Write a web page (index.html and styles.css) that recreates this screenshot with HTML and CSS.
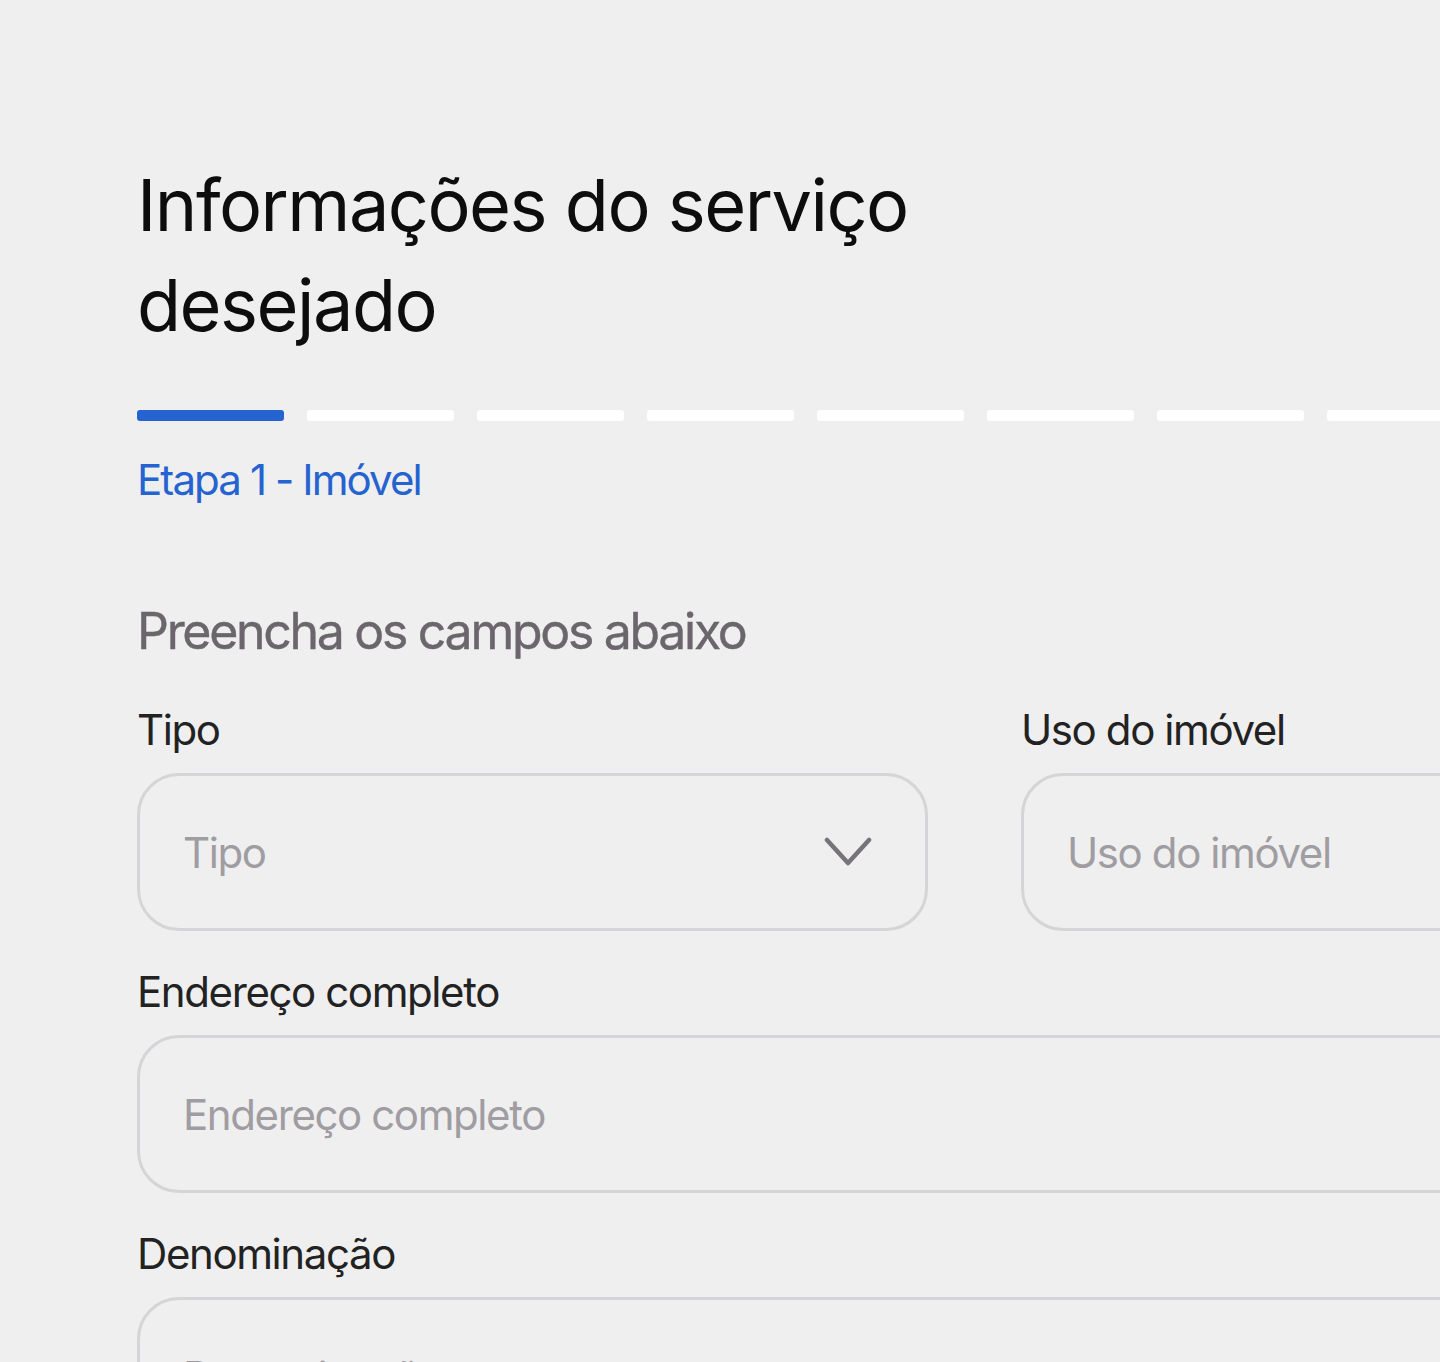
FILE: index.html
```html
<!DOCTYPE html>
<html lang="pt-BR">

<head>
    <meta charset="UTF-8">
    <meta name="viewport" content="width=device-width, initial-scale=1.0">
    <title>Informações do serviço desejado</title>
    <link rel="stylesheet" href="styles.css">
</head>

<body>
    <div class="page">
        <h1 class="title">Informações do serviço<br>desejado</h1>

        <div class="steps">
            <span class="step active"></span>
            <span class="step"></span>
            <span class="step"></span>
            <span class="step"></span>
            <span class="step"></span>
            <span class="step"></span>
            <span class="step"></span>
            <span class="step"></span>
            <span class="step"></span>
        </div>
        <p class="step-name">Etapa 1 - Imóvel</p>

        <form class="form">
            <h2 class="form-title">Preencha os campos abaixo</h2>

            <div class="row">
                <div class="field">
                    <label class="label">Tipo</label>
                    <div class="input select">
                        <span class="placeholder">Tipo</span>
                        <svg class="chevron" width="48" height="30" viewBox="0 0 48 30">
                            <path d="M3 3 L24 26 L45 3" fill="none" stroke="#77737a" stroke-width="4.5"
                                stroke-linecap="round" stroke-linejoin="round" />
                        </svg>
                    </div>
                </div>
                <div class="field">
                    <label class="label">Uso do imóvel</label>
                    <div class="input">
                        <span class="placeholder">Uso do imóvel</span>
                    </div>
                </div>
            </div>

            <div class="field">
                <label class="label">Endereço completo</label>
                <div class="input">
                    <span class="placeholder">Endereço completo</span>
                </div>
            </div>

            <div class="field">
                <label class="label">Denominação</label>
                <div class="input">
                    <span class="placeholder">Denominação</span>
                </div>
            </div>
        </form>
    </div>
</body>

</html>
```

FILE: styles.css
```css
html,
body {
    margin: 0;
    padding: 0;
    background-color: #efefef;
    overflow: hidden;
}

body {
    font-family: Inter, "Noto Sans", sans-serif;
    color: #1f1f1f;
}

.page {
    width: 1675px;
    padding: 155px 0 0 137px;
}

.title {
    margin: 0;
    font-size: 72px;
    font-weight: 400;
    line-height: 100px;
    color: #0d0d0d;
    letter-spacing: -1.5px;
}

.steps {
    display: flex;
    gap: 23px;
    margin-top: 55px;
}

.step {
    width: 147px;
    height: 11px;
    border-radius: 3px;
    background-color: #ffffff;
    flex-shrink: 0;
}

.step.active {
    background-color: #2563d0;
}

.step-name {
    margin: 34px 0 0;
    font-size: 42px;
    line-height: 50px;
    color: #2563d0;
    letter-spacing: -1.9px;
}

.form {
    margin-top: 96px;
}

.form-title {
    margin: 0 0 44px;
    font-size: 50px;
    font-weight: 400;
    line-height: 60px;
    color: #6b666c;
    letter-spacing: -2.3px;
    -webkit-text-stroke: 0.4px #6b666c;
}

.row {
    display: grid;
    grid-template-columns: 1fr 1fr;
    gap: 93px;
}

.field {
    margin-bottom: 36px;
}

.label {
    display: block;
    font-size: 42px;
    line-height: 50px;
    color: #222222;
    margin-bottom: 18px;
    letter-spacing: -1.4px;
}

.input {
    display: flex;
    align-items: center;
    justify-content: space-between;
    height: 158px;
    box-sizing: border-box;
    border: 3px solid #d5d4d6;
    border-radius: 42px;
    padding: 0 53px 0 43px;
}

.placeholder {
    font-size: 42px;
    color: #a09da2;
    letter-spacing: -1.4px;
}
```
